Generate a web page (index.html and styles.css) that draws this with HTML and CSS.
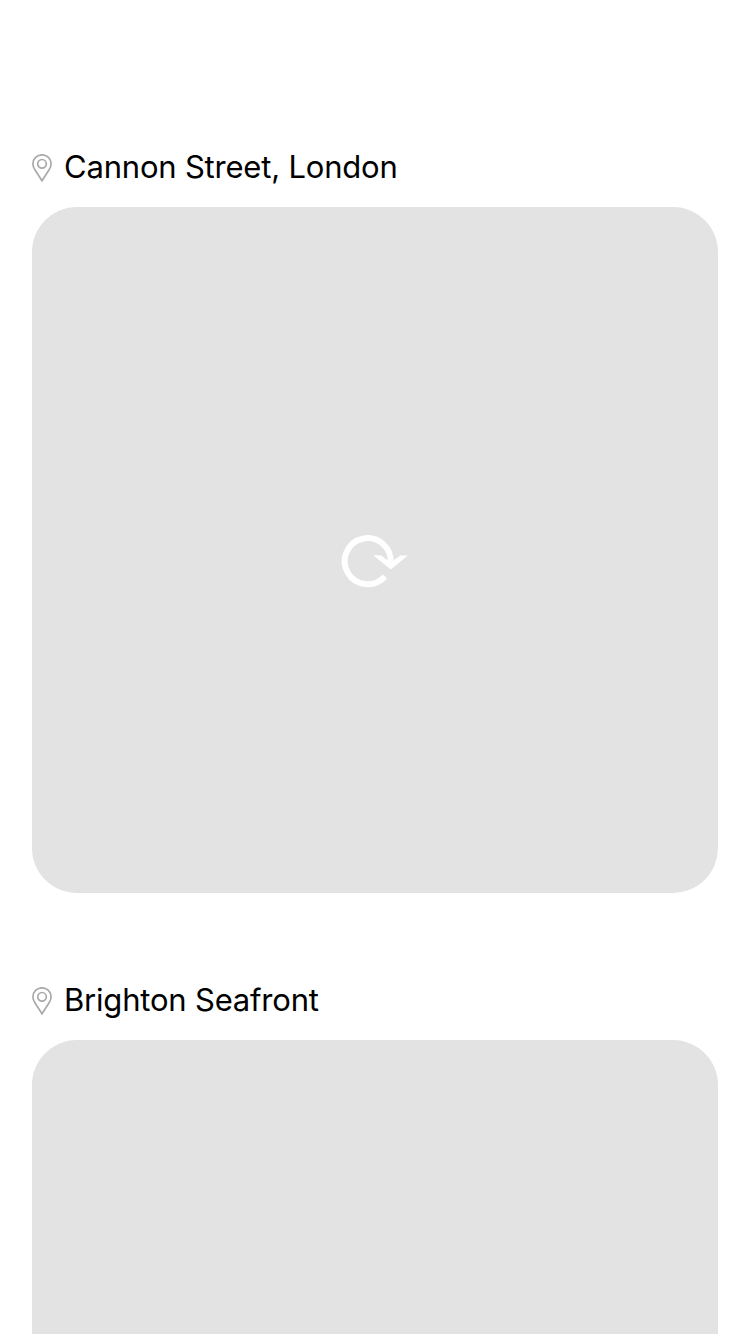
FILE: index.html
```html
<!DOCTYPE html>
<html lang="en">
<head>
<meta charset="utf-8">
<title>Photos</title>
<link rel="stylesheet" href="styles.css">
</head>
<body>
<main class="feed">
  <article class="post">
    <header class="location">
      <svg class="pin" viewBox="0 0 20 28"><path d="M10 26.800L3.200 16.300C1.700 14 .9 12.300 .9 9.900a9.100 9.100 0 0 1 18.200 0C19.100 12.300 18.300 14 16.800 16.300Z"/><circle cx="10" cy="9.800" r="4.300"/></svg>
      <h2 class="place">Cannon Street, London</h2>
    </header>
    <div class="photo">
      <svg class="reload" viewBox="0 0 68 54"><path class="ring" d="M43.900 42.400A23 23 0 1 1 49.600 29"/><path class="arrow" d="M32.300 21.300H40L46.800 26.500L49.500 28L52.300 26.500L59.500 21.500H66.800L49.800 35.600Z"/></svg>
    </div>
  </article>
  <article class="post">
    <header class="location">
      <svg class="pin" viewBox="0 0 20 28"><path d="M10 26.800L3.200 16.300C1.700 14 .9 12.300 .9 9.900a9.100 9.100 0 0 1 18.200 0C19.100 12.300 18.300 14 16.800 16.300Z"/><circle cx="10" cy="9.800" r="4.300"/></svg>
      <h2 class="place">Brighton Seafront</h2>
    </header>
    <div class="photo photo-cut"></div>
  </article>
</main>
</body>
</html>
```
FILE: styles.css
```css
body { margin: 0; background: #fff; font-family: Inter, sans-serif; }
.feed { box-sizing: border-box; height: 1334px; overflow: hidden; padding: 147px 32px 0; display: flex; flex-direction: column; gap: 87px; }
.location { display: flex; align-items: center; gap: 12px; height: 40px; margin-bottom: 20px; }
.pin { width: 20px; height: 28px; margin-top: 2px; fill: none; stroke: #a9a9a9; stroke-width: 1.7; }
.place { margin: 0; font-size: 31px; line-height: 40px; font-weight: 400; color: #000; white-space: nowrap; letter-spacing: -0.2px; }
.photo { height: 686px; border-radius: 45px; background: #e3e3e3; display: flex; align-items: center; justify-content: center; }
.photo-cut { height: 294px; border-radius: 45px 45px 0 0; }
.reload { width: 68px; height: 54px; margin-top: 22px; overflow: visible; }
.ring { fill: none; stroke: #fff; stroke-width: 6; }
.arrow { fill: #fff; }
```
